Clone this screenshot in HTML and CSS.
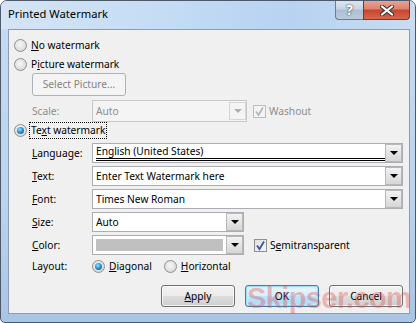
FILE: index.html
```html
<!DOCTYPE html>
<html lang="en">
<head>
    <meta charset="UTF-8">
    <title>Printed Watermark</title>
    <link rel="stylesheet" href="styles.css">
</head>
<body>

<div class="window">
    <div class="titlebar">
        <span class="title">Printed Watermark</span>
        <div class="caption-btns">
            <div class="cap-help">?</div>
            <div class="cap-close">
                <svg width="14" height="11" viewBox="0 0 14 11">
                    <path d="M2 1.5 L12 9.5 M12 1.5 L2 9.5" stroke="#3b3b3b" stroke-width="4.2" stroke-linecap="round"/>
                    <path d="M2 1.5 L12 9.5 M12 1.5 L2 9.5" stroke="#fff" stroke-width="2.2" stroke-linecap="round"/>
                </svg>
            </div>
        </div>
    </div>

    <div class="client">
        <div class="opt-row">
            <span class="radio"></span>
            <span class="opt-label"><u>N</u>o watermark</span>
        </div>
        <div class="opt-row pic-opt">
            <span class="radio"></span>
            <span class="opt-label">P<u>i</u>cture watermark</span>
        </div>

        <div class="indent">
            <div class="btn btn-disabled select-pic">Select Picture...</div>
        </div>

        <div class="field-row scale-row">
            <span class="lbl disabled-text">Scale:</span>
            <div class="combo combo-disabled scale-combo">
                <span class="combo-text">Auto</span>
                <span class="drop drop-disabled"><i class="arrow"></i></span>
            </div>
            <span class="check check-disabled washout">
                <svg width="11" height="11" viewBox="0 0 11 11"><path d="M2 5.5 L4.5 9 L9 1.5" fill="none" stroke="#b3b3b3" stroke-width="1.6"/></svg>
            </span>
            <span class="disabled-text">Washout</span>
        </div>

        <div class="opt-row text-opt">
            <span class="radio on"></span>
            <span class="opt-label focus">Te<u>x</u>t watermark</span>
        </div>

        <div class="field-row first-field">
            <span class="lbl"><u>L</u>anguage:</span>
            <div class="combo wide">
                <span class="combo-text lang">English (United States)</span>
                <span class="drop"><i class="arrow"></i></span>
            </div>
        </div>
        <div class="field-row">
            <span class="lbl"><u>T</u>ext:</span>
            <div class="combo wide">
                <span class="combo-text">Enter Text Watermark here</span>
                <span class="drop"><i class="arrow"></i></span>
            </div>
        </div>
        <div class="field-row">
            <span class="lbl"><u>F</u>ont:</span>
            <div class="combo wide">
                <span class="combo-text">Times New Roman</span>
                <span class="drop"><i class="arrow"></i></span>
            </div>
        </div>
        <div class="field-row">
            <span class="lbl"><u>S</u>ize:</span>
            <div class="combo short">
                <span class="combo-text">Auto</span>
                <span class="drop"><i class="arrow"></i></span>
            </div>
        </div>
        <div class="field-row">
            <span class="lbl"><u>C</u>olor:</span>
            <div class="combo short">
                <span class="swatch"></span>
                <span class="drop"><i class="arrow"></i></span>
            </div>
            <span class="check semi">
                <svg width="11" height="11" viewBox="0 0 11 11"><path d="M2 5.5 L4.5 9 L9 1.5" fill="none" stroke="#3f55a0" stroke-width="1.8"/></svg>
            </span>
            <span>S<u>e</u>mitransparent</span>
        </div>

        <div class="field-row layout-row">
            <span class="lbl">Layout:</span>
            <span class="radio on"></span>
            <span class="opt-label"><u>D</u>iagonal</span>
            <span class="radio horiz"></span>
            <span class="opt-label"><u>H</u>orizontal</span>
        </div>

        <div class="buttons">
            <div class="btn"><u>A</u>pply</div>
            <div class="btn btn-default">OK</div>
            <div class="btn">Cancel</div>
        </div>
    </div>

    <div class="stamp">Skipser.com</div>
</div>

</body>
</html>
```

FILE: styles.css
```css
body {
    margin: 0;
    background-color: #ffffff;
    font-family: "Noto Sans", "Open Sans", sans-serif;
    font-size: 10.2px;
    color: #000;
}
u {
    text-decoration: underline;
    text-underline-offset: 1px;
}
.window {
    position: relative;
    width: 414px;
    height: 321px;
    border: 1px solid #4d5868;
    border-radius: 7px 7px 5px 5px;
    background: linear-gradient(180deg, #dbe9f7 0%, #c3daf1 10%, #bcd4ee 60%, #a9c5e6 100%);
    overflow: hidden;
}
.titlebar {
    height: 28px;
    display: flex;
    justify-content: space-between;
    background: linear-gradient(90deg, #d4e4f5 0%, #c4dcf4 40%, #b7d3f0 70%, #c9dcf0 100%);
}
.title {
    font-size: 11.2px;
    padding: 5px 0 0 7px;
    color: #000;
}
.caption-btns {
    display: flex;
    height: 19px;
    margin-right: 5px;
}
.cap-help {
    width: 27px;
    height: 18px;
    border: 1px solid #6d7d91;
    border-top: none;
    border-right: none;
    border-radius: 0 0 0 4px;
    background: linear-gradient(180deg, #dce6f1 0%, #c7d4e3 45%, #aebed2 50%, #bccbdc 100%);
    color: #fff;
    font-size: 14px;
    font-weight: bold;
    text-align: center;
    line-height: 17px;
    text-shadow: 0 0 2px #3c4a5c, 0 0 1px #3c4a5c;
}
.cap-close {
    width: 45px;
    height: 18px;
    border: 1px solid #6f3a34;
    border-top: none;
    border-radius: 0 0 4px 0;
    background: linear-gradient(180deg, #e8a393 0%, #dc8170 45%, #c8452e 50%, #d6664c 100%);
    display: flex;
    justify-content: center;
    align-items: center;
}
.client {
    margin: 0 5px 0 7px;
    height: 276px;
    border: 1px solid #8a9db5;
    background-color: #f0f0f0;
    padding: 7px 6px 0 5px;
}
.opt-row {
    display: flex;
    align-items: center;
    height: 16px;
    margin-bottom: 3px;
}
.pic-opt {
    margin-bottom: 1px;
}
.radio {
    position: relative;
    width: 11px;
    height: 11px;
    border: 1px solid #8e8f8f;
    border-radius: 50%;
    background: radial-gradient(circle at 45% 40%, #f6f6f6 0%, #e2e2e2 55%, #c9c9c9 100%);
    flex: none;
}
.radio.on::after {
    content: "";
    position: absolute;
    left: 2px;
    top: 2px;
    width: 7px;
    height: 7px;
    border-radius: 50%;
    background: radial-gradient(circle at 40% 35%, #9be3ff 0%, #2e93d0 45%, #0d4d86 100%);
}
.opt-label {
    margin-left: 4px;
}
.focus {
    outline: 1px dotted #000;
    outline-offset: 0;
    padding: 0 1px;
    margin-left: 3px;
    line-height: 15px;
}
.indent {
    padding-left: 18px;
}
.btn {
    box-sizing: border-box;
    width: 74px;
    height: 22px;
    border: 1px solid #707070;
    border-radius: 3px;
    background: linear-gradient(180deg, #f2f2f2 0%, #ebebeb 48%, #dddddd 52%, #cfcfcf 100%);
    box-shadow: inset 0 0 0 1px rgba(255, 255, 255, 0.7);
    text-align: center;
    line-height: 20px;
}
.btn-disabled {
    border-color: #adb2b5;
    background: #f4f4f4;
    color: #838383;
    box-shadow: none;
}
.select-pic {
    width: 94px;
    height: 23px;
    line-height: 21px;
}
.btn-default {
    border-color: #3c7fb1;
    box-shadow: inset 0 0 0 1px #9fe1f8, inset 0 0 2px 2px #c8eefc;
    background: linear-gradient(180deg, #eaf6fd 0%, #d9f0fc 48%, #bee6fd 52%, #a7d9f5 100%);
}
.field-row {
    display: flex;
    align-items: center;
    height: 20px;
    margin-top: 3px;
    padding-left: 18px;
}
.first-field {
    margin-top: 4px;
}
.lbl {
    width: 60px;
    flex: none;
}
.disabled-text {
    color: #8d8d8d;
}
.scale-row {
    height: 22px;
    margin-top: 4px;
}
.text-opt {
    height: 17px;
    margin: 0;
}
.combo {
    box-sizing: border-box;
    height: 20px;
    border: 1px solid #abadb3;
    background-color: #fff;
    display: flex;
    align-items: center;
    justify-content: space-between;
    padding: 0 0 0 3px;
}
.wide {
    width: 311px;
}
.short {
    width: 152px;
}
.scale-combo {
    width: 155px;
    height: 22px;
    margin-right: 6px;
}
.combo-disabled {
    background-color: #f4f4f4;
    border-color: #c8c8c8;
    color: #8d8d8d;
}
.combo-text {
    white-space: nowrap;
}
.lang {
    flex: 1;
    border-bottom: 3px double #000;
    line-height: 13px;
    margin-right: 0;
}
.drop {
    box-sizing: border-box;
    width: 17px;
    height: 18px;
    border: 1px solid #b8b8b8;
    background: linear-gradient(180deg, #f3f3f3 0%, #e4e4e4 50%, #d6d6d6 100%);
    display: flex;
    align-items: center;
    justify-content: center;
    flex: none;
}
.drop-disabled {
    background: #f4f4f4;
    border-color: #d6d6d6;
}
.arrow {
    width: 0;
    height: 0;
    border-left: 4px solid transparent;
    border-right: 4px solid transparent;
    border-top: 4px solid #000;
}
.drop-disabled .arrow {
    border-top-color: #b0b0b0;
}
.swatch {
    width: 127px;
    height: 12px;
    background-color: #c0c0c0;
}
.check {
    box-sizing: border-box;
    width: 13px;
    height: 13px;
    border: 1px solid #8e8f8f;
    background: linear-gradient(135deg, #e0e0e0 0%, #f6f6f6 100%);
    display: flex;
    align-items: center;
    justify-content: center;
    margin-right: 3px;
    flex: none;
}
.check-disabled {
    border-color: #bcbcbc;
    background: #f4f4f4;
}
.semi {
    margin-left: 10px;
}
.layout-row {
    height: 16px;
}
.horiz {
    margin-left: 12px;
}
.buttons {
    display: flex;
    justify-content: flex-end;
    gap: 10px;
    margin-top: 11px;
}
.stamp {
    position: absolute;
    left: 246px;
    top: 281px;
    font-family: "Liberation Sans", sans-serif;
    font-size: 29px;
    font-weight: bold;
    letter-spacing: -0.6px;
    color: rgba(225, 70, 70, 0.35);
    pointer-events: none;
}
```
